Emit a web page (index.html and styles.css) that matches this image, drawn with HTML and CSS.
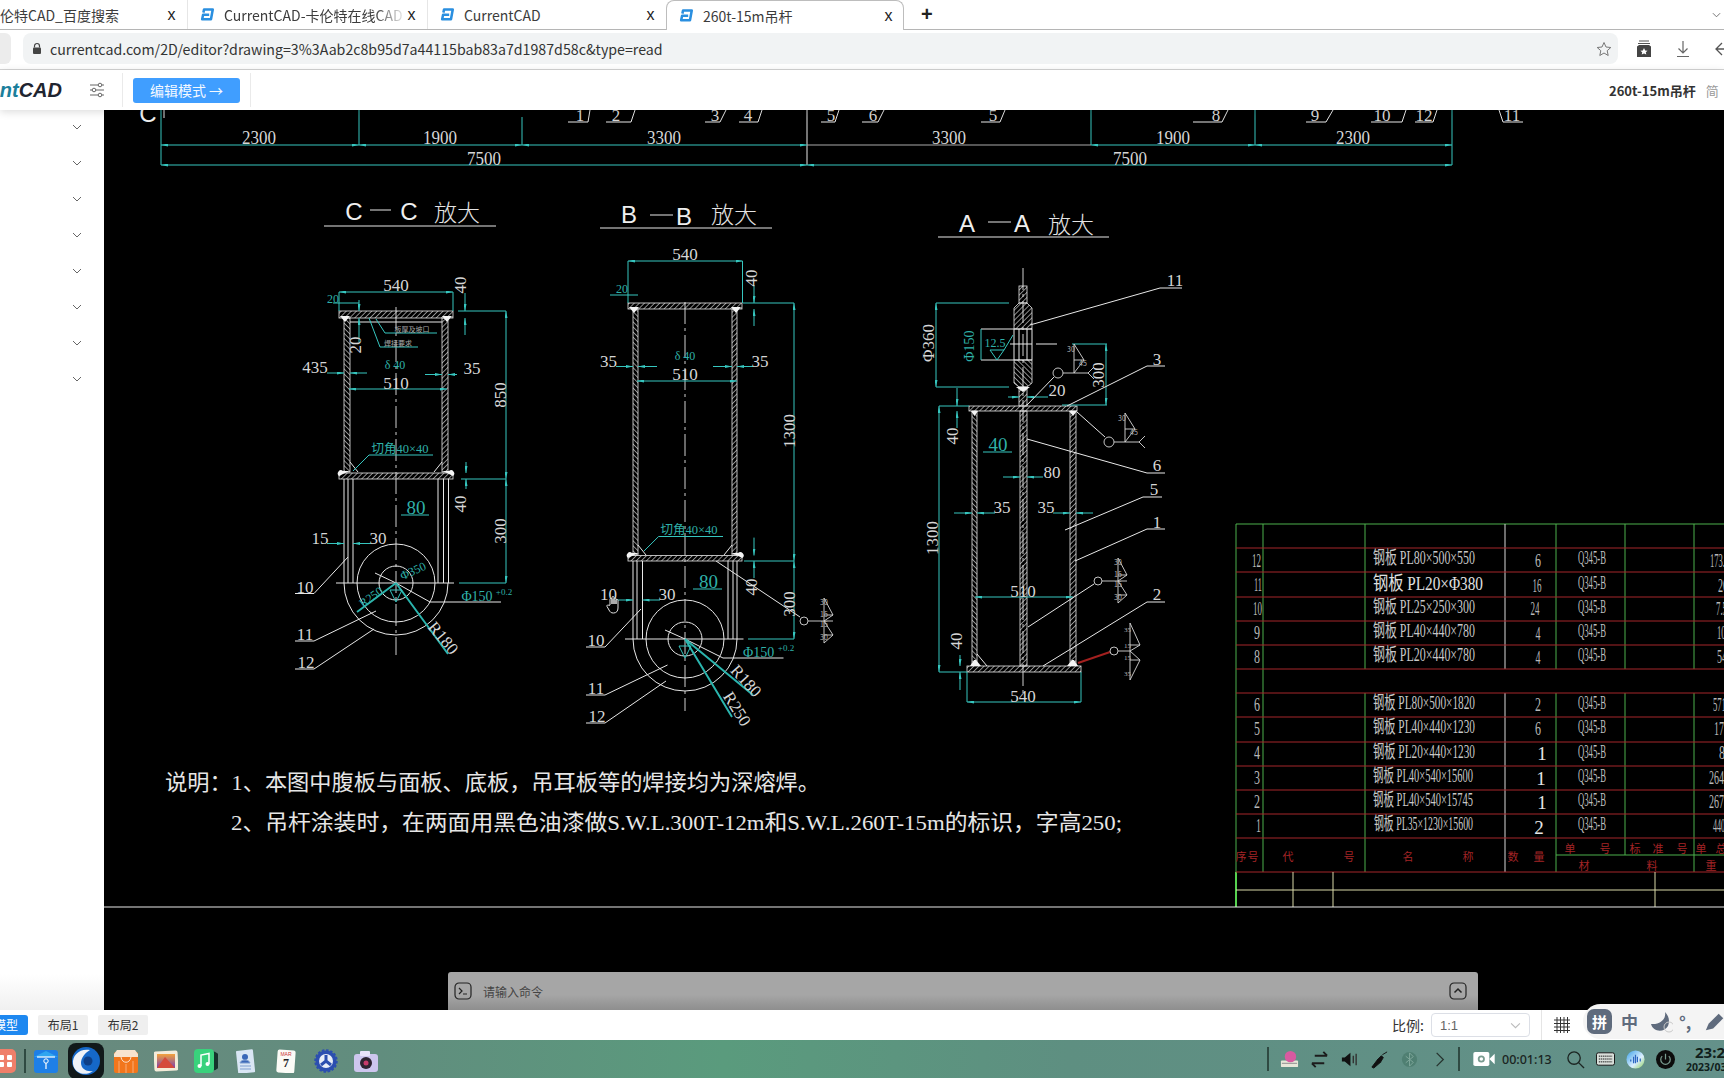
FILE: index.html
```html
<!DOCTYPE html>
<html lang="zh-CN">
<head>
<meta charset="utf-8">
<title>260t-15m吊杆</title>
<link rel="stylesheet" href="styles.css">
</head>
<body>
<svg class="defs" width="0" height="0" aria-hidden="true">
  <defs>
    <symbol id="ccad" viewBox="0 0 16 16">
      <path d="M3.6 6 4.300 2.700H13.600L11.700 13H2.300L3.300 8.300H9.800" fill="none" stroke="#2a8fe0" stroke-width="2.700" stroke-linejoin="round"/>
    </symbol>
    <pattern id="h" width="3.600" height="3.600" patternUnits="userSpaceOnUse" patternTransform="rotate(45)">
      <line x1="0" y1="0" x2="0" y2="3.600" stroke="#e4e4e4" stroke-width="1.200"/>
    </pattern>
    <pattern id="h2" width="3.600" height="3.600" patternUnits="userSpaceOnUse" patternTransform="rotate(-45)">
      <line x1="0" y1="0" x2="0" y2="3.600" stroke="#e4e4e4" stroke-width="1.200"/>
    </pattern>
    <marker id="a" viewBox="0 0 7 3" refX="7" refY="1.500" markerWidth="7" markerHeight="3" orient="auto-start-reverse" markerUnits="userSpaceOnUse">
      <path d="M0 0 7 1.500 0 3Z" fill="#36c6bf"/>
    </marker>
    <g id="wa" class="thin">
      <circle cx="1058" cy="373" r="5"/>
      <path d="M1063 373H1088M1074 344V373M1074 344 1084 360H1074M1074 373 1084 360M1088 373 1094 367M1088 373 1094 379"/>
      <text class="tiny" x="1067" y="352">30</text>
      <text class="tiny" x="1079" y="366">45</text>
    </g>
    <g id="wb" class="thin">
      <circle cx="1098" cy="581" r="4"/>
      <path d="M1102 581H1127M1118 558V603M1118 558 1127 575H1118M1118 603 1127 595H1118M1118 581 1127 575M1118 581 1127 595"/>
      <text class="tiny" x="1114" y="565">30</text>
      <text class="tiny" x="1114" y="577">15</text>
      <text class="tiny" x="1114" y="587">15</text>
      <text class="tiny" x="1114" y="600">30</text>
    </g>
  </defs>
</svg>

<header class="tabs">
  <div class="tab tab-first"><span class="tab-text">伦特CAD_百度搜索</span><span class="tab-x">x</span></div>
  <div class="tab tab-second"><svg class="tab-ico"><use href="#ccad"/></svg><span class="tab-text fade">CurrentCAD-卡伦特在线CAD</span><span class="tab-x">x</span></div>
  <div class="tab tab-third"><svg class="tab-ico"><use href="#ccad"/></svg><span class="tab-text">CurrentCAD</span><span class="tab-x">x</span></div>
  <div class="tab tab-active"><svg class="tab-ico"><use href="#ccad"/></svg><span class="tab-text">260t-15m吊杆</span><span class="tab-x">x</span></div>
  <span class="tab-plus">+</span>
  <svg class="tab-more" viewBox="0 0 10 6"><path d="M1 1 5 5 9 1" fill="none" stroke="#666"/></svg>
</header>

<nav class="addr">
  <div class="nav-btn"></div>
  <div class="url">
    <svg class="lock" viewBox="0 0 10 12"><path d="M2.500 5V3.500A2.500 2.500 0 0 1 7.500 3.500V5" fill="none" stroke="#444" stroke-width="1.200"/><rect x="1" y="5" width="8" height="6.500" rx="1" fill="#444"/></svg>
    <span class="url-text">currentcad.com/2D/editor?drawing=3%3Aab2c8b95d7a44115bab83a7d1987d58c&amp;type=read</span>
    <svg class="star" viewBox="0 0 16 16"><path d="M8 1.500 10 6 14.800 6.500 11.200 9.700 12.200 14.500 8 12 3.800 14.500 4.800 9.700 1.200 6.500 6 6Z" fill="none" stroke="#777"/></svg>
  </div>
  <div class="addr-tools">
    <svg class="addr-ico" viewBox="0 0 16 18"><path d="M3 1H13M2 3.500H14" stroke="#555" stroke-width="1.200"/><path d="M1 6.500 3 5H13L15 6.500V17H1Z" fill="#444"/><path d="M8 8 9.200 10.400 11.600 10.700 9.800 12.300 10.300 14.600 8 13.400 5.700 14.600 6.200 12.300 4.400 10.700 6.800 10.400Z" fill="#fff"/></svg>
    <svg class="addr-ico" viewBox="0 0 16 18"><path d="M8 1V13M3.500 8.500 8 13 12.500 8.500M2 16.500H14" fill="none" stroke="#666" stroke-width="1.200"/></svg>
    <svg class="addr-ico" viewBox="0 0 16 18"><path d="M15 9H2M8 3 2 9 8 15" fill="none" stroke="#555" stroke-width="1.300"/></svg>
  </div>
</nav>

<section class="tool">
  <div class="logo"><span class="logo-a">nt</span>CAD</div>
  <svg class="sliders" viewBox="0 0 16 16"><path d="M1 3H9M13 3H15M1 8H3M7 8H15M1 13H9M13 13H15" stroke="#666"/><circle cx="11" cy="3" r="1.800" fill="none" stroke="#666"/><circle cx="5" cy="8" r="1.800" fill="none" stroke="#666"/><circle cx="11" cy="13" r="1.800" fill="none" stroke="#666"/></svg>
  <i class="vsep"></i>
  <button class="edit-btn">编辑模式 →</button>
  <i class="vsep"></i>
  <div class="doc"><b class="doc-name">260t-15m吊杆</b><span class="doc-tag">简</span></div>
</section>

<main class="main">
  <aside class="side">
    <div class="side-row"><svg class="chev" viewBox="0 0 10 6"><path d="M1 1 5 5 9 1"/></svg></div>
    <div class="side-row"><svg class="chev" viewBox="0 0 10 6"><path d="M1 1 5 5 9 1"/></svg></div>
    <div class="side-row"><svg class="chev" viewBox="0 0 10 6"><path d="M1 1 5 5 9 1"/></svg></div>
    <div class="side-row"><svg class="chev" viewBox="0 0 10 6"><path d="M1 1 5 5 9 1"/></svg></div>
    <div class="side-row"><svg class="chev" viewBox="0 0 10 6"><path d="M1 1 5 5 9 1"/></svg></div>
    <div class="side-row"><svg class="chev" viewBox="0 0 10 6"><path d="M1 1 5 5 9 1"/></svg></div>
    <div class="side-row"><svg class="chev" viewBox="0 0 10 6"><path d="M1 1 5 5 9 1"/></svg></div>
    <div class="side-row"><svg class="chev" viewBox="0 0 10 6"><path d="M1 1 5 5 9 1"/></svg></div>
  </aside>
  <div class="canvas">
    <svg class="cad" width="1620" height="900" viewBox="104 110 1620 900">
      <!-- top dimension band -->
      <text class="tl mid" x="148" y="122">C</text>
      <path class="c" d="M161 110V165M359 110V145M522 117V145M1091 110V145M1255 110V145M1452 110V165"/>
      <path class="w" d="M807 110V165M164 110V118"/>
      <g class="c" marker-start="url(#a)" marker-end="url(#a)">
        <line x1="161" y1="145" x2="359" y2="145"/><line x1="359" y1="145" x2="522" y2="145"/><line x1="522" y1="145" x2="807" y2="145"/>
        <line x1="1091" y1="145" x2="1255" y2="145"/><line x1="1255" y1="145" x2="1452" y2="145"/>
        <line x1="161" y1="165" x2="807" y2="165"/><line x1="807" y1="165" x2="1452" y2="165"/>
      </g>
      <line class="gy" x1="807" y1="145" x2="1091" y2="145"/>
      <text class="d m top" x="259" y="137" textLength="34" lengthAdjust="spacingAndGlyphs">2300</text>
      <text class="d m top" x="440" y="137" textLength="34" lengthAdjust="spacingAndGlyphs">1900</text>
      <text class="d m top" x="664" y="137" textLength="34" lengthAdjust="spacingAndGlyphs">3300</text>
      <text class="d m top" x="949" y="137" textLength="34" lengthAdjust="spacingAndGlyphs">3300</text>
      <text class="d m top" x="1173" y="137" textLength="34" lengthAdjust="spacingAndGlyphs">1900</text>
      <text class="d m top" x="1353" y="137" textLength="34" lengthAdjust="spacingAndGlyphs">2300</text>
      <text class="d m top" x="484" y="158" textLength="34" lengthAdjust="spacingAndGlyphs">7500</text>
      <text class="d m top" x="1130" y="158" textLength="34" lengthAdjust="spacingAndGlyphs">7500</text>
      <path class="w" d="M568 122H588L590 110M606 122H631L635 110M705 122H720L726 110M739 122H758L762 110M821 122H835L839 110M862 122H878L884 110M981 122H1000L1005 110M1193 122H1222L1228 110M1306 122H1326L1333 110M1371 122H1402L1406 110M1415 122H1433L1437 110M1523 122H1503L1499 110"/>
      <text class="d m" x="580" y="115">1</text><text class="d m" x="616" y="115">2</text><text class="d m" x="715" y="115">3</text><text class="d m" x="748" y="115">4</text>
      <text class="d m" x="831" y="115">5</text><text class="d m" x="873" y="115">6</text><text class="d m" x="993" y="115">5</text><text class="d m" x="1216" y="115">8</text>
      <text class="d m" x="1315" y="115">9</text><text class="d m" x="1382" y="115">10</text><text class="d m" x="1424" y="115">12</text><text class="d m" x="1512" y="115">11</text>

      <!-- C-C -->
      <text class="tl m" x="354" y="211">C</text><path class="w" d="M370 210H391"/><text class="tl m" x="409" y="211">C</text><text class="tz m" x="457" y="211">放大</text>
      <path class="w" d="M324 226H496"/>
      <path class="cl" d="M396 307V655"/>
      <rect class="hb" x="339" y="311" width="114" height="7" fill="url(#h)"/>
      <rect class="hb" x="344" y="318" width="6" height="154" fill="url(#h2)"/>
      <rect class="hb" x="442" y="318" width="6" height="154" fill="url(#h)"/>
      <rect class="hb" x="339" y="473" width="114" height="6" fill="url(#h)"/>
      <path class="w" d="M350 322H442M350 462 358 472M442 462 434 472M344 479V583M348 479V583M353 479V583M438 479V583M443.500 479V583M448.500 479V583M336 583H454M344 583A52 52 0 0 0 448 583"/>
      <circle class="w" cx="396" cy="583" r="17"/><circle class="w" cx="396" cy="583" r="39"/>
      <path class="blob" d="M340 316 350 316 345 322ZM442 316 452 316 447 322ZM339 476A3 3 0 0 1 343 471H350L345 473ZM453 476A3 3 0 0 0 449 471H442L447 473Z"/>
      <path class="c" d="M339 292V311M453 292V311M458 311H506M461 479H506M459 583H506M333 303H359M369 318 380 347H418M376 319 385 333H437M369 455H433M369 455 353 471M401 515H429"/>
      <g class="c" marker-start="url(#a)" marker-end="url(#a)">
        <line x1="339" y1="292" x2="453" y2="292"/><line x1="349" y1="389" x2="447" y2="389"/><line x1="506" y1="311" x2="506" y2="479"/><line x1="506" y1="479" x2="506" y2="583"/>
      </g>
      <g class="c" marker-end="url(#a)">
        <line x1="327" y1="373" x2="344" y2="373"/><line x1="367" y1="373" x2="350" y2="373"/><line x1="425" y1="374.500" x2="442" y2="374.500"/><line x1="457" y1="374.500" x2="448" y2="374.500"/>
        <line x1="327" y1="543.500" x2="344" y2="543.500"/><line x1="371" y1="543.500" x2="353" y2="543.500"/>
        <line x1="465" y1="293" x2="465" y2="311"/><line x1="465" y1="335" x2="465" y2="318"/><line x1="466" y1="462" x2="466" y2="473"/><line x1="466" y1="489" x2="466" y2="479"/>
        <line x1="359" y1="300" x2="359" y2="311"/><line x1="359" y1="342" x2="359" y2="318"/>
      </g>
      <text class="d m" x="396" y="285">540</text>
      <text class="d m" transform="rotate(-90 460 285)" x="460" y="285">40</text>
      <text class="d m" transform="rotate(-90 355 345)" x="355" y="345">20</text>
      <text class="tc small m" x="333" y="299">20</text>
      <text class="tc tiny m" x="412" y="330">板厚及坡口</text><text class="tc tiny m" x="398" y="344">焊接要求</text>
      <text class="d m" x="315" y="367">435</text><text class="d m" x="472" y="368">35</text>
      <text class="tc small m" x="395" y="365">δ 40</text>
      <text class="d m" x="396" y="383">510</text>
      <text class="d m" transform="rotate(-90 500 395)" x="500" y="395">850</text>
      <text class="d m" transform="rotate(-90 500 531)" x="500" y="531">300</text>
      <text class="d m" transform="rotate(-90 460 504)" x="460" y="504">40</text>
      <text class="tc cut m" x="400" y="449">切角40×40</text>
      <text class="tc big m" x="416" y="507">80</text>
      <text class="d m" x="320" y="538">15</text><text class="d m" x="378" y="538">30</text>
      <text class="d m" x="305" y="587">10</text><text class="d m" x="305" y="634">11</text><text class="d m" x="306" y="662">12</text>
      <path class="w" d="M295 593.500H314L348 557M295 641H314L376 611M295 669H314L374 629M375 573 396 583 430 602H501"/>
      <path class="cb" d="M396 583 357 612M396 583 448 654"/>
      <text class="tc small m" transform="rotate(-25 413 571)" x="413" y="571">Φ350</text>
      <text class="tc small m" transform="rotate(-35 371 597)" x="371" y="597">R250</text>
      <text class="d m" transform="rotate(50 443 638)" x="443" y="638">R180</text>
      <path class="c" d="M390 590H402L396 602Z"/>
      <text class="tc m ph" x="477" y="596">Φ150</text><text class="tc tiny2 m" x="504" y="592">+0.2</text>

      <!-- B-B -->
      <text class="tl m" x="629" y="214">B</text><path class="w" d="M650 215H673"/><text class="tl m" x="684" y="216">B</text><text class="tz m" x="734" y="213">放大</text>
      <path class="w" d="M600 228H772"/>
      <path class="cl" d="M685 302V711"/>
      <rect class="hb" x="628" y="303" width="114" height="6" fill="url(#h)"/>
      <rect class="hb" x="633" y="309" width="5" height="246" fill="url(#h2)"/>
      <rect class="hb" x="732" y="309" width="5" height="246" fill="url(#h)"/>
      <rect class="hb" x="628" y="555.500" width="114" height="5.500" fill="url(#h)"/>
      <path class="w" d="M638 545 646 555M732 545 724 555M633 561V639M637 561V639M642.500 561V639M728 561V639M733 561V639M737 561V639M625 639H743.500M633 639A52 52 0 0 0 737 639"/>
      <circle class="w" cx="685" cy="639" r="17"/><circle class="w" cx="685" cy="639" r="39"/>
      <path class="blob" d="M629 307 639 307 634 313ZM731 307 741 307 736 313ZM628 558A3 3 0 0 1 632 553H639L634 555ZM742.500 558A3 3 0 0 0 738 553H731L736 555Z"/>
      <path class="c" d="M628 261V303M742.500 261V303M743 303H794M610 295H638M748 639H794M744 561H794M658.600 536.500H723M658.600 536.500 644 551M693 589H722"/>
      <g class="c" marker-start="url(#a)" marker-end="url(#a)">
        <line x1="628" y1="261" x2="742.500" y2="261"/><line x1="637" y1="381" x2="737" y2="381"/><line x1="794" y1="303" x2="794" y2="561"/><line x1="794" y1="561" x2="794" y2="639"/>
      </g>
      <g class="c" marker-end="url(#a)">
        <line x1="616" y1="366.500" x2="633" y2="366.500"/><line x1="657" y1="366.500" x2="638" y2="366.500"/><line x1="713" y1="366.500" x2="732" y2="366.500"/><line x1="753" y1="366.500" x2="737" y2="366.500"/>
        <line x1="616" y1="600" x2="633" y2="600"/><line x1="660" y1="600" x2="642.500" y2="600"/>
        <line x1="754" y1="285" x2="754" y2="303"/><line x1="754" y1="326" x2="754" y2="309"/><line x1="754" y1="537.600" x2="754" y2="555.500"/><line x1="754" y1="578" x2="754" y2="561"/>
      </g>
      <text class="d m" x="685" y="254">540</text>
      <text class="d m" transform="rotate(-90 751 278)" x="751" y="278">40</text>
      <text class="tc small m" x="622" y="289">20</text>
      <text class="d m" x="608.500" y="361">35</text><text class="d m" x="760" y="361">35</text>
      <text class="tc small m" x="685" y="356">δ 40</text>
      <text class="d m" x="685" y="374.500">510</text>
      <text class="d m" transform="rotate(-90 789 431)" x="789" y="431">1300</text>
      <text class="d m" transform="rotate(-90 789 604)" x="789" y="604">300</text>
      <text class="d m" transform="rotate(-90 751 587)" x="751" y="587">40</text>
      <text class="tc cut m" x="689" y="530">切角40×40</text>
      <text class="tc big m" x="708.600" y="581">80</text>
      <text class="d m" x="608.500" y="594">10</text><text class="d m" x="667" y="594">30</text>
      <text class="d m" x="596" y="640">10</text><text class="d m" x="596" y="688">11</text><text class="d m" x="597" y="716">12</text>
      <path class="w" d="M586 647H605L641 609M586 695H605L667.500 665M586 723H605L666 681M716 561 800 617M665 630 685 639 723 658H783.500"/>
      <path class="cb" d="M685 639 753 695M685 639 732 717"/>
      <text class="d m" transform="rotate(48 746 681)" x="746" y="681">R180</text>
      <text class="d m" transform="rotate(58 737 709)" x="737" y="709">R250</text>
      <path class="c" d="M679 646H691L685 658Z"/>
      <text class="tc m ph" x="758.600" y="652">Φ150</text><text class="tc tiny2 m" x="786" y="647.600">+0.2</text>
      <use href="#wb" transform="translate(-294 40)"/>
      <svg class="hand" x="606" y="596" width="14" height="18" viewBox="0 0 14 18"><path d="M4 9V3.500A1 1 0 0 1 6 3.500V8 1.500A1 1 0 0 1 8 1.500V8 3A1 1 0 0 1 10 3V8 4.500A1 1 0 0 1 12 4.500V12C12 15 10.500 17 7.500 17 5 17 4 16 3 14L1 10.500C.5 9 2 8.500 3 9.500Z" fill="#000" stroke="#e6e6e6"/></svg>

      <!-- A-A -->
      <text class="tl m" x="967" y="223">A</text><path class="w" d="M988 222H1011"/><text class="tl m" x="1022" y="223">A</text><text class="tz m" x="1071" y="223">放大</text>
      <path class="w" d="M938 237H1109"/>
      <path class="cl" d="M1023 268V693"/>
      <rect class="hb" x="1019" y="286" width="8" height="17" fill="url(#h)"/>
      <path class="hb" d="M1014 329V308L1019 303H1027L1032 308V329Z" fill="url(#h)"/>
      <path class="hb" d="M1014 360V383L1019 387H1027L1032 383V360Z" fill="url(#h2)"/>
      <path class="w" d="M1014 329V360M1032 329V360M1019 329V360M1027 329V360M981 329H1032M981 360H1032M1010 344H1032M1036 344H1057"/>
      <rect class="hb" x="1019" y="387" width="8" height="19" fill="url(#h)"/>
      <rect class="hb" x="969" y="406" width="108" height="5" fill="url(#h)"/>
      <rect class="hb" x="972" y="411" width="5" height="254" fill="url(#h2)"/>
      <rect class="hb" x="1070" y="411" width="6" height="254" fill="url(#h)"/>
      <rect class="hb" x="1020" y="411" width="7" height="255" fill="url(#h)"/>
      <rect class="hb" x="967" y="666" width="114" height="6" fill="url(#h)"/>
      <path class="w" d="M977 654 987 666"/>
      <path class="blob" d="M971 411H978L974.500 416ZM1069 411H1077L1073 416ZM970 666 974 660H976L981 666ZM1067 666 1072 660H1074L1078 666ZM1016 387H1030L1023 392Z"/>
      <path class="c" d="M936 303H1009M936 387H1009M981 329V360M1072 344H1107M1062 405H1107M939 406H969M939 672H967M983 452H1012M967 672V702M1081 672V702"/>
      <g class="c" marker-start="url(#a)" marker-end="url(#a)">
        <line x1="936" y1="303" x2="936" y2="387"/><line x1="1106" y1="344" x2="1106" y2="405"/><line x1="939" y1="406" x2="939" y2="672"/><line x1="975" y1="597" x2="1073" y2="597"/><line x1="967" y1="702" x2="1081" y2="702"/>
      </g>
      <g class="c" marker-end="url(#a)">
        <line x1="954" y1="513" x2="972" y2="513"/><line x1="995" y1="513" x2="977" y2="513"/><line x1="1053" y1="513" x2="1070" y2="513"/><line x1="1093" y1="513" x2="1076" y2="513"/>
        <line x1="1003" y1="477" x2="1020" y2="477"/><line x1="1043" y1="477" x2="1027" y2="477"/><line x1="1008" y1="397" x2="1019" y2="397"/><line x1="1048" y1="397" x2="1027" y2="397"/>
        <line x1="957" y1="388" x2="957" y2="406"/><line x1="957" y1="428" x2="957" y2="411"/><line x1="960" y1="655" x2="960" y2="666"/><line x1="960" y1="690" x2="960" y2="672"/>
      </g>
      <text class="d m" transform="rotate(-90 928 343)" x="928" y="343">Φ360</text>
      <text class="tc m ph" transform="rotate(-90 969 346)" x="969" y="346">Φ150</text>
      <text class="tc small m" x="995" y="343">12.5</text>
      <path class="c" d="M990 350H1004L997 360ZM1004 350 1013 335"/>
      <text class="d m" transform="rotate(-90 1098 375)" x="1098" y="375">300</text>
      <text class="d m" x="1057" y="390">20</text>
      <text class="d m" transform="rotate(-90 952 436)" x="952" y="436">40</text>
      <text class="tc big m" x="998" y="444">40</text>
      <text class="d m" x="1052" y="472">80</text><text class="d m" x="1002" y="507">35</text><text class="d m" x="1046" y="507">35</text>
      <text class="d m" transform="rotate(-90 932 538)" x="932" y="538">1300</text>
      <text class="d m" x="1023" y="591">510</text>
      <text class="d m" transform="rotate(-90 956 641)" x="956" y="641">40</text>
      <text class="d m" x="1023" y="696">540</text>
      <use href="#wa"/>
      <use href="#wa" transform="translate(51 69)"/>
      <use href="#wb"/>
      <path class="w" d="M1182 288H1160L1030 325M1165 366H1147L1067 406M1165 473H1147L1027 439M1162 497H1143L1065 530M1165 529H1147L1075 561M1165 602H1147L1043 666M1054 377 1027 405M1094 584 1028 627M1105 437 1077 412"/>
      <text class="d m" x="1175" y="280">11</text><text class="d m" x="1157" y="359">3</text><text class="d m" x="1157" y="465">6</text>
      <text class="d m" x="1154" y="489">5</text><text class="d m" x="1157" y="522">1</text><text class="d m" x="1157" y="594">2</text>
      <line class="rl" x1="1078" y1="663" x2="1110" y2="652"/>
      <g class="thin">
        <circle cx="1114" cy="651" r="4"/>
        <path d="M1118 651H1130M1130 623V680M1130 623 1140 645H1130M1130 680 1140 660H1130M1130 651 1140 645M1130 651 1140 660"/>
        <text class="tiny" x="1124" y="632">35</text><text class="tiny" x="1124" y="648">15</text><text class="tiny" x="1124" y="660">15</text><text class="tiny" x="1124" y="676">35</text>
      </g>

      <!-- notes -->
      <text class="note" x="165" y="790" textLength="655" lengthAdjust="spacingAndGlyphs">说明：1、本图中腹板与面板、底板，吊耳板等的焊接均为深熔焊。</text>
      <text class="note" x="231" y="830" textLength="891" lengthAdjust="spacingAndGlyphs">2、吊杆涂装时，在两面用黑色油漆做S.W.L.300T-12m和S.W.L.260T-15m的标识，字高250;</text>

      <!-- BOM -->
      <path class="gl" d="M1236 524H1724M1236 524V907M1263 524V872M1365 524V669M1365 693V872M1556 524V669M1556 693V872M1625 524V669M1625 693V855M1694 524V669M1694 693V872M1556 855H1724"/>
      <path class="gl2" d="M1236 872V907"/>
      <path class="wl2" d="M1505 524V669M1505 693V872"/>
      <path class="rd" d="M1236 548H1724M1236 572H1724M1236 597H1724M1236 621H1724M1236 645H1724M1236 669H1724M1236 693H1724M1236 717H1724M1236 742H1724M1236 766H1724M1236 790H1724M1236 814H1724M1236 838H1724M1236 872H1724"/>
      <path class="yl" d="M1236 890H1724M1293 872V907M1333 872V907M1655 872V907"/>
      <line class="wl" x1="104" y1="907" x2="1724" y2="907"/>
      <g class="no">
        <text x="1261" y="560" textLength="9" lengthAdjust="spacingAndGlyphs">12</text><text x="1262" y="584" textLength="8" lengthAdjust="spacingAndGlyphs">11</text><text x="1262" y="608" textLength="9" lengthAdjust="spacingAndGlyphs">10</text><text x="1260" y="632" textLength="6" lengthAdjust="spacingAndGlyphs">9</text><text x="1260" y="656" textLength="6" lengthAdjust="spacingAndGlyphs">8</text>
        <text x="1260" y="704" textLength="6" lengthAdjust="spacingAndGlyphs">6</text><text x="1260" y="728" textLength="6" lengthAdjust="spacingAndGlyphs">5</text><text x="1260" y="752" textLength="6" lengthAdjust="spacingAndGlyphs">4</text><text x="1260" y="777" textLength="6" lengthAdjust="spacingAndGlyphs">3</text><text x="1260" y="801" textLength="6" lengthAdjust="spacingAndGlyphs">2</text><text x="1261" y="825" textLength="5" lengthAdjust="spacingAndGlyphs">1</text>
      </g>
      <g class="nm">
        <text x="1373" y="558" textLength="102" lengthAdjust="spacingAndGlyphs">钢板 PL80×500×550</text>
        <text class="nm-b" x="1373" y="583" textLength="110" lengthAdjust="spacingAndGlyphs">钢板 PL20×Φ380</text>
        <text x="1373" y="607" textLength="102" lengthAdjust="spacingAndGlyphs">钢板 PL25×250×300</text>
        <text x="1373" y="631" textLength="102" lengthAdjust="spacingAndGlyphs">钢板 PL40×440×780</text>
        <text x="1373" y="655" textLength="102" lengthAdjust="spacingAndGlyphs">钢板 PL20×440×780</text>
        <text x="1373" y="703" textLength="102" lengthAdjust="spacingAndGlyphs">钢板 PL80×500×1820</text>
        <text x="1373" y="727" textLength="102" lengthAdjust="spacingAndGlyphs">钢板 PL40×440×1230</text>
        <text x="1373" y="752" textLength="102" lengthAdjust="spacingAndGlyphs">钢板 PL20×440×1230</text>
        <text x="1373" y="776" textLength="100" lengthAdjust="spacingAndGlyphs">钢板 PL40×540×15600</text>
        <text x="1373" y="800" textLength="100" lengthAdjust="spacingAndGlyphs">钢板 PL40×540×15745</text>
        <text x="1374" y="824" textLength="99" lengthAdjust="spacingAndGlyphs">钢板 PL35×1230×15600</text>
      </g>
      <g class="qty">
        <text x="1538" y="560" textLength="6" lengthAdjust="spacingAndGlyphs">6</text><text x="1537" y="585" textLength="9" lengthAdjust="spacingAndGlyphs">16</text><text x="1535" y="608" textLength="9" lengthAdjust="spacingAndGlyphs">24</text><text x="1538" y="633" textLength="5" lengthAdjust="spacingAndGlyphs">4</text><text x="1538" y="657" textLength="5" lengthAdjust="spacingAndGlyphs">4</text>
        <text x="1538" y="704" textLength="6" lengthAdjust="spacingAndGlyphs">2</text><text x="1538" y="728" textLength="6" lengthAdjust="spacingAndGlyphs">6</text>
        <text class="qty-b" x="1542" y="753">1</text><text class="qty-b" x="1541" y="778">1</text><text class="qty-b" x="1542" y="802">1</text><text class="qty-b" x="1539" y="827">2</text>
      </g>
      <g class="mat">
        <text x="1592" y="558" textLength="28" lengthAdjust="spacingAndGlyphs">Q345-B</text><text x="1592" y="583" textLength="28" lengthAdjust="spacingAndGlyphs">Q345-B</text><text x="1592" y="607" textLength="28" lengthAdjust="spacingAndGlyphs">Q345-B</text><text x="1592" y="631" textLength="28" lengthAdjust="spacingAndGlyphs">Q345-B</text><text x="1592" y="655" textLength="28" lengthAdjust="spacingAndGlyphs">Q345-B</text>
        <text x="1592" y="703" textLength="28" lengthAdjust="spacingAndGlyphs">Q345-B</text><text x="1592" y="727" textLength="28" lengthAdjust="spacingAndGlyphs">Q345-B</text><text x="1592" y="752" textLength="28" lengthAdjust="spacingAndGlyphs">Q345-B</text><text x="1592" y="776" textLength="28" lengthAdjust="spacingAndGlyphs">Q345-B</text><text x="1592" y="800" textLength="28" lengthAdjust="spacingAndGlyphs">Q345-B</text><text x="1592" y="824" textLength="28" lengthAdjust="spacingAndGlyphs">Q345-B</text>
      </g>
      <g class="wt">
        <text x="1710" y="560" textLength="15" lengthAdjust="spacingAndGlyphs">173.</text><text x="1718" y="585" textLength="10" lengthAdjust="spacingAndGlyphs">20</text><text x="1716" y="608" textLength="11" lengthAdjust="spacingAndGlyphs">7.5</text><text x="1717" y="632" textLength="13" lengthAdjust="spacingAndGlyphs">100</text><text x="1717" y="656" textLength="10" lengthAdjust="spacingAndGlyphs">54</text>
        <text x="1713" y="704" textLength="13" lengthAdjust="spacingAndGlyphs">571</text><text x="1714" y="728" textLength="10" lengthAdjust="spacingAndGlyphs">17</text><text x="1719" y="752" textLength="6" lengthAdjust="spacingAndGlyphs">8</text><text x="1709" y="777" textLength="15" lengthAdjust="spacingAndGlyphs">264</text><text x="1709" y="801" textLength="15" lengthAdjust="spacingAndGlyphs">267</text><text x="1713" y="825" textLength="12" lengthAdjust="spacingAndGlyphs">440</text>
      </g>
      <g class="hd">
        <text x="1241" y="857">序</text><text x="1253" y="857">号</text><text x="1288" y="857">代</text><text x="1349" y="857">号</text><text x="1408" y="857">名</text><text x="1468" y="857">称</text><text x="1513" y="857">数</text><text x="1539" y="857">量</text>
        <text x="1570" y="849">单</text><text x="1605" y="849">号</text><text x="1635" y="849">标</text><text x="1658" y="849">准</text><text x="1682" y="849">号</text><text x="1701" y="849">单</text><text x="1721" y="849">总</text>
        <text x="1584" y="866">材</text><text x="1652" y="866">料</text><text x="1711" y="866">重</text>
      </g>
    </svg>
    <div class="cmd">
      <svg class="cmd-ico" viewBox="0 0 18 18"><rect x="1" y="1" width="16" height="16" rx="4" fill="none" stroke="#222" stroke-width="1.200"/><path d="M5 6 8 9 5 12M9 12H13" fill="none" stroke="#222" stroke-width="1.200"/></svg>
      <span class="cmd-text">请输入命令</span>
      <svg class="cmd-ico cmd-up" viewBox="0 0 18 18"><rect x="1" y="1" width="16" height="16" rx="4" fill="none" stroke="#222" stroke-width="1.200"/><path d="M5.500 10.500 9 7 12.500 10.500" fill="none" stroke="#222" stroke-width="1.500"/></svg>
    </div>
  </div>
</main>

<section class="sheet">
  <span class="sheet-tab sheet-on">模型</span>
  <span class="sheet-tab">布局1</span>
  <span class="sheet-tab">布局2</span>
  <div class="scale">
    <span class="scale-label">比例:</span>
    <div class="scale-sel"><span>1:1</span><svg class="chev chev-l" viewBox="0 0 10 6"><path d="M1 1 5 5 9 1"/></svg></div>
    <i class="scale-sep"></i>
    <svg class="grid-ico" viewBox="0 0 16 16"><path d="M0 3H16M0 6.500H16M0 10H16M0 13.500H16M3 0V16M6.500 0V16M10 0V16M13.500 0V16" stroke="#333"/></svg>
  </div>
  <div class="ime">
    <span class="ime-key">拼</span>
    <span class="ime-cn">中</span>
    <svg class="ime-moon" viewBox="0 0 24 24"><path d="M16 2C17.500 9 11 15 2 14 4 22 15 23 19 16 21 11 20 6 16 2Z" fill="#5f6b7d"/><circle cx="20" cy="17" r="5" fill="none" stroke="#c9c9c9"/></svg>
    <span class="ime-dot">°,</span>
    <svg class="ime-pen" viewBox="0 0 24 24"><path d="M2 21 5 14 16 3 21 8 10 19Z" fill="#5f6b7d"/></svg>
  </div>
</section>

<footer class="dock">
  <div class="apps">
    <svg class="app app-cut" viewBox="0 0 16 24"><rect x="-10" width="26" height="24" rx="5" fill="#ef7f6a"/><rect x="-1" y="6" width="5" height="5" rx="1" fill="#fff"/><rect x="7" y="6" width="5" height="5" rx="1" fill="#fff"/><rect x="-1" y="13" width="5" height="5" rx="1" fill="#fff"/><rect x="7" y="13" width="5" height="5" rx="1" fill="#fff"/></svg>
    <i class="dock-sep"></i>
    <svg class="app" viewBox="0 0 24 24"><rect y="1" width="24" height="23" rx="3" fill="#1e7fe6"/><path d="M0 8 12 2 24 8Z" fill="#2fa5f0"/><path d="M3 8H21" stroke="#fff" stroke-width="1.200"/><circle cx="12" cy="12" r="2.200" fill="none" stroke="#fff"/><path d="M12 14V20" stroke="#fff" stroke-width="1.200"/></svg>
    <svg class="app app-big" viewBox="0 0 36 36"><rect width="36" height="36" rx="8" fill="#11191a"/><circle cx="18" cy="18" r="14" fill="#1568c8"/><path d="M22 7C12 5 4 12 5 21 6 30 17 34 25 28 19 29 13 26 13 20 13 15 17 10 22 7Z" fill="#eef2f7"/><circle cx="20" cy="18" r="4.500" fill="#0d3f86"/></svg>
    <svg class="app" viewBox="0 0 24 24"><rect y="3" width="24" height="21" rx="2" fill="#f2761c"/><path d="M0 5 3 1H21L24 5V8H0Z" fill="#f8e3cf"/><path d="M7 8C8 15 16 15 17 8" fill="none" stroke="#f8e3cf"/><path d="M5 12V24M19 12V24M12 15V24" stroke="#f69b58" stroke-width="1.500"/></svg>
    <svg class="app" viewBox="0 0 24 24"><defs><linearGradient id="ph" x1="0" y1="0" x2="0" y2="1"><stop offset="0" stop-color="#f2a23c"/><stop offset="1" stop-color="#7d3fb0"/></linearGradient></defs><rect y="2" width="24" height="20" rx="2" fill="#f4ecd9" transform="rotate(-3 12 12)"/><rect x="3" y="5" width="18" height="14" fill="url(#ph)"/><path d="M3 19 11 8 21 19Z" fill="#d54a3b"/></svg>
    <svg class="app" viewBox="0 0 24 24"><circle cx="17" cy="12" r="10" fill="#16332c"/><rect width="20" height="24" rx="4" fill="#39d27c"/><path d="M7 17V6L15 4.500V15" fill="none" stroke="#fff" stroke-width="1.500"/><circle cx="5.500" cy="17" r="2" fill="#fff"/><circle cx="13.500" cy="15" r="2" fill="#fff"/></svg>
    <svg class="app" viewBox="0 0 24 24"><rect x="3" y="1" width="17" height="23" rx="1" fill="#d9e6f4" transform="rotate(-6 12 12)"/><circle cx="11" cy="8" r="3" fill="#3a68b8"/><path d="M6 14C7 10 15 10 16 14ZM6 17H17M6 20H17" fill="#3a68b8" stroke="#7f9fd0"/></svg>
    <svg class="app" viewBox="0 0 24 24"><rect x="3" y="1" width="18" height="23" rx="2" fill="#fbfbf6" transform="rotate(4 12 12)"/><text class="cal-m" x="12" y="7">MAR</text><text class="cal-d" x="12" y="18">7</text></svg>
    <svg class="app" viewBox="0 0 24 24"><circle cx="12" cy="12" r="10.500" fill="#2c4fb0" stroke="#2c4fb0" stroke-width="2.500" stroke-dasharray="2.500 1.600"/><circle cx="12" cy="12" r="7" fill="#e9eef8"/><path d="M12 12V6M12 12 7 16M12 12 17 16" stroke="#2c4fb0" stroke-width="3"/></svg>
    <svg class="app" viewBox="0 0 24 24"><rect y="5" width="24" height="18" rx="3" fill="#cdc6ee"/><rect x="6" y="2" width="10" height="5" rx="1" fill="#e8e3fa"/><circle cx="12" cy="14" r="6" fill="#2d2330"/><circle cx="12" cy="14" r="2.500" fill="#c73a6a"/></svg>
  </div>
  <div class="tray">
    <i class="tray-sep"></i>
    <span class="tray-slot"><svg class="tray-ico" viewBox="0 0 20 20"><rect x="1" y="11" width="18" height="7" rx="1" fill="#e8e6d8"/><circle cx="11" cy="7" r="6" fill="#d85aa0"/><path d="M2 14H18" stroke="#888"/></svg></span>
    <span class="tray-slot"><svg class="tray-ico" viewBox="0 0 20 20"><path d="M5 6H18M14 2 18 6M15 14H2M6 18 2 14" fill="none" stroke="#1c1c1c" stroke-width="2"/></svg></span>
    <span class="tray-slot"><svg class="tray-ico" viewBox="0 0 20 20"><path d="M2 8H5L11 3V17L5 12H2Z" fill="#111"/><path d="M14 6V14M17 4V16" stroke="#333" stroke-width="1.500"/></svg></span>
    <span class="tray-slot"><svg class="tray-ico" viewBox="0 0 20 20"><path d="M2 18 8 10 11 13 4 19ZM8 10 12 6 14 8 11 13ZM13 5 18 2" fill="#111" stroke="#111"/></svg></span>
    <span class="tray-slot"><svg class="tray-ico" viewBox="0 0 20 20"><circle cx="10" cy="10" r="8" fill="#4f7f72"/><path d="M6 6.500 14 13 10 17V3L14 7 6 13.500" fill="none" stroke="#7fa89b"/></svg></span>
    <span class="tray-slot"><svg class="tray-ico" viewBox="0 0 20 20"><path d="M7 3 14 10 7 17" fill="none" stroke="#26332e" stroke-width="1.300"/></svg></span>
    <i class="tray-sep tray-sep2"></i>
    <span class="tray-slot rec"><svg class="tray-ico" viewBox="0 0 24 18"><rect y="1" width="18" height="16" rx="2" fill="#fff"/><circle cx="9" cy="9" r="4" fill="#7a9c90"/><circle cx="9" cy="9" r="2" fill="#fff"/><path d="M18 9 24 3V15Z" fill="#fff"/></svg></span>
    <span class="timer">00:01:13</span>
    <span class="tray-slot"><svg class="tray-ico" viewBox="0 0 20 20"><circle cx="8.500" cy="8.500" r="6.500" fill="none" stroke="#1c2522" stroke-width="1.400"/><path d="M13 13 19 19" stroke="#1c2522" stroke-width="1.400"/></svg></span>
    <span class="tray-slot"><svg class="tray-ico tray-kb" viewBox="0 0 20 14"><rect x=".5" y=".5" width="19" height="13" rx="2" fill="#d9dfda" stroke="#111"/><path d="M3 4H17M3 7H17M3 10H17" stroke="#111" stroke-dasharray="1.500 .7"/></svg></span>
    <span class="tray-slot"><svg class="tray-ico" viewBox="0 0 20 20"><defs><linearGradient id="vo" x1="0" y1="0" x2="1" y2="1"><stop offset="0" stop-color="#3aa0e8"/><stop offset=".6" stop-color="#dcefff"/><stop offset="1" stop-color="#8fd05a"/></linearGradient></defs><circle cx="10" cy="10" r="9.500" fill="url(#vo)"/><path d="M5 10V12M8 7V14M10 5V14M12 7V13M15 9V12" stroke="#2d66c0" stroke-width="1.300"/></svg></span>
    <span class="tray-slot"><svg class="tray-ico" viewBox="0 0 20 20"><circle cx="10" cy="10" r="10" fill="#0c0c0c"/><path d="M6.500 6.500A5 5 0 1 0 13.500 6.500M10 4V10" fill="none" stroke="#7a9c90" stroke-width="1.300"/></svg></span>
    <div class="clock"><span class="clock-t">23:26</span><span class="clock-d">2023/03/07</span></div>
  </div>
</footer>
</body>
</html>
```

FILE: styles.css
```css
* { box-sizing: border-box; }
html, body { margin: 0; padding: 0; }
body {
  width: 1724px;
  height: 1078px;
  overflow: hidden;
  display: flex;
  flex-direction: column;
  background: #fff;
  font-family: "Noto Sans CJK SC", "Noto Sans", sans-serif;
  color: #333;
}
.defs { position: absolute; }

/* tabs */
.tabs {
  height: 30px;
  flex: none;
  display: flex;
  align-items: stretch;
  background: #fff;
  border-bottom: 1px solid #b5b5b5;
  position: relative;
}
.tab {
  display: flex;
  align-items: center;
  font-size: 14px;
  color: #3c3c3c;
  border-right: 1px solid #e6e6e6;
  padding-right: 11px;
}
.tab-first { width: 188px; }
.tab-second { width: 240px; padding-left: 12px; }
.tab-third { width: 238px; padding-left: 12px; border-right: 0; }
.tab-active {
  width: 238px;
  padding-left: 12px;
  border: 1px solid #bdbdbd;
  border-bottom: 0;
  border-radius: 8px 8px 0 0;
  height: 30px;
  background: #fff;
  padding-right: 10px;
}
.tab-ico { width: 15px; height: 15px; flex: none; margin-right: 9px; }
.tab-text { flex: 1; white-space: nowrap; overflow: hidden; }
.fade { -webkit-mask-image: linear-gradient(90deg, #000 82%, transparent 100%); mask-image: linear-gradient(90deg, #000 82%, transparent 100%); }
.tab-x { width: 9px; font-size: 16px; flex: none; color: #222; text-align: center; font-family: "Liberation Sans", sans-serif; }
.tab-plus { margin-left: 17px; font-size: 20px; font-weight: 700; line-height: 28px; color: #222; font-family: "Liberation Sans", sans-serif; }
.tab-more { width: 9px; height: 6px; margin: 12px 3px 0 auto; }

/* address */
.addr {
  height: 40px;
  flex: none;
  display: flex;
  align-items: center;
  background: #fff;
  border-bottom: 1px solid #d4d4d4;
  padding-bottom: 2px;
  overflow: hidden;
}
.nav-btn { width: 11px; height: 31px; background: #ececec; border-radius: 0 6px 6px 0; flex: none; }
.url {
  margin-left: 12px;
  width: 1595px;
  flex: none;
  height: 31px;
  border-radius: 8px;
  background: #f1f3f4;
  display: flex;
  align-items: center;
  padding: 0 6px 0 9px;
}
.lock { width: 10px; height: 13px; flex: none; margin-right: 8px; }
.url-text { font-size: 14.200px; color: #333; white-space: nowrap; flex: 1; }
.star { width: 16px; height: 16px; flex: none; }
.addr-tools { display: flex; gap: 23px; margin-left: 18px; align-items: center; flex: none; }
.addr-ico { width: 16px; height: 18px; flex: none; }

/* toolbar */
.tool {
  height: 40px;
  flex: none;
  display: flex;
  align-items: center;
  background: #fff;
  box-shadow: 0 2px 8px rgba(0, 0, 0, .14);
  position: relative;
  z-index: 2;
}
.logo {
  width: 62px;
  font: italic 700 20px "Liberation Sans", sans-serif;
  color: #1f2530;
  text-align: right;
  white-space: nowrap;
  overflow: hidden;
  direction: rtl;
}
.logo-a { color: #1b7f9c; }
.sliders { width: 16px; height: 16px; margin-left: 27px; flex: none; }
.vsep { width: 1px; height: 34px; background: #eaeaea; flex: none; }
.tool .vsep:nth-of-type(1) { margin-left: 17px; }
.edit-btn {
  width: 107px;
  height: 25px;
  margin: 0 10px;
  border: 0;
  border-radius: 3px;
  background: #409eff;
  color: #f4f9ff;
  font: 14px "Noto Sans CJK SC", sans-serif;
  padding: 0;
}
.doc { margin-left: auto; display: flex; align-items: center; gap: 10px; white-space: nowrap; width: 115px; overflow: hidden; }
.doc-name { font-size: 13px; color: #333; }
.doc-tag { font-size: 13px; color: #999; }

/* main */
.main { height: 900px; flex: none; display: flex; }
.side { width: 104px; flex: none; background: linear-gradient(#fff 96%, #f0f0f0); }
.side-row { height: 36px; display: flex; align-items: center; justify-content: flex-end; padding: 0 22px 2px 0; }
.chev { width: 10px; height: 6px; fill: none; stroke: #666; }
.canvas { flex: 1; background: #000; position: relative; overflow: hidden; }
.cad { display: block; }

.cad text { font-family: "Liberation Serif", "Noto Sans CJK SC", serif; }
.m { text-anchor: middle; dominant-baseline: central; }
.mid { text-anchor: middle; }
.w { stroke: #e8e8e8; stroke-width: 1; fill: none; }
.hb { stroke: #e8e8e8; stroke-width: .8; }
.gy { stroke: #aaa; }
.c { stroke: #36c6bf; stroke-width: 1; fill: none; }
.cb { stroke: #2bb5ae; stroke-width: 2; }
.cl { stroke: #cfcfcf; stroke-width: 1; stroke-dasharray: 22 4 3 4; fill: none; }
.blob { fill: #f4f4f4; }
.rl { stroke: #a3201f; stroke-width: 2; }
.d { font-size: 17px; fill: #d6d6d6; }
.top { font-size: 19px; }
.cad .tl { font-family: "Liberation Sans", sans-serif; font-size: 24px; fill: #efefef; }
.cad .tz { font-family: "Noto Sans CJK SC", sans-serif; font-size: 23px; font-weight: 300; fill: #e4e4e4; }
.tc { fill: #2fb0a9; }
.small { font-size: 12px; }
.ph { font-size: 14px; }
.big { font-size: 19px; }
.cut { font-size: 12.500px; }
.tiny { font-size: 7px; fill: #aaa; }
.tiny2 { font-size: 9px; }
.thin { stroke: #d8d8d8; fill: none; stroke-width: .9; }
.thin text { stroke: none; fill: #b5b5b5; }
.note { font-size: 22px; fill: #e6e6e6; }
.gl { stroke: #4cb04c; stroke-width: 1; fill: none; }
.gl2 { stroke: #56d24f; stroke-width: 2; fill: none; }
.wl2 { stroke: #d8d8d8; fill: none; }
.rd { stroke: #a5262a; stroke-width: 1; fill: none; }
.yl { stroke: #d9d9a8; stroke-width: 1; fill: none; }
.wl { stroke: #e8e8e8; stroke-width: 1; }
.no text, .qty text, .wt text { font-size: 19px; fill: #b8b8b8; dominant-baseline: central; }
.no text { text-anchor: end; }
.qty text { text-anchor: middle; }
.qty .qty-b { font-size: 19px; fill: #e6e6e6; }
.nm text { font-size: 18px; fill: #c8c8c8; dominant-baseline: central; }
.nm .nm-b { font-size: 19px; fill: #e0e0e0; }
.mat text { font-size: 18px; fill: #bdbdbd; text-anchor: middle; dominant-baseline: central; }
.hd text { font-size: 11px; fill: #a32426; text-anchor: middle; dominant-baseline: central; }

/* command */
.cmd {
  position: absolute;
  left: 344px;
  top: 862px;
  width: 1030px;
  height: 38px;
  border-radius: 3px 3px 0 0;
  background: linear-gradient(#a6a6a6 60%, #8e8e8e);
  display: flex;
  align-items: center;
  padding: 0 11px 0 6px;
}
.cmd-ico { width: 18px; height: 18px; flex: none; }
.cmd-text { margin-left: 11px; font-size: 12px; color: #444; }
.cmd-up { margin-left: auto; }

/* sheet tabs */
.sheet {
  height: 30px;
  flex: none;
  display: flex;
  align-items: center;
  gap: 10px;
  background: #fff;
  position: relative;
}
.sheet-tab {
  width: 50px;
  height: 20px;
  background: #efefef;
  border-radius: 2px;
  font-size: 12px;
  color: #333;
  line-height: 20px;
  text-align: center;
}
.sheet-on {
  width: 28px;
  background: #1e88f0;
  color: #fff;
  border-radius: 0 3px 3px 0;
  text-align: right;
  padding-right: 10px;
  white-space: nowrap;
  overflow: hidden;
  direction: rtl;
}
.scale { margin-left: auto; display: flex; align-items: center; padding-right: 154px; height: 100%; }
.scale-label { font-size: 14px; color: #333; margin-right: 7px; }
.scale-sel {
  width: 99px;
  height: 24px;
  border: 1px solid #dcdfe6;
  border-radius: 4px;
  display: flex;
  align-items: center;
  justify-content: space-between;
  font: 13px "Liberation Sans", sans-serif;
  color: #666;
  padding: 0 8px;
}
.chev-l { width: 11px; height: 7px; stroke: #bbb; }
.scale-sep { width: 1px; height: 100%; background: #e5e5e5; margin: 0 12px 0 11px; }
.grid-ico { width: 16px; height: 16px; flex: none; }
.ime {
  position: absolute;
  left: 1583px;
  top: -6px;
  width: 141px;
  height: 35px;
  background: #f4f4f4;
  border-radius: 18px 0 0 18px;
  display: flex;
  align-items: center;
  padding-left: 4px;
  overflow: hidden;
}
.ime-key { width: 25px; height: 25px; border-radius: 7px; background: #5f6b7d; color: #fff; font-size: 15px; font-weight: 700; text-align: center; line-height: 25px; flex: none; }
.ime-cn { margin-left: 9px; font-size: 17px; font-weight: 700; color: #5f6b7d; width: 17px; flex: none; line-height: 20px; }
.ime-moon { width: 24px; height: 24px; margin-left: 11px; flex: none; }
.ime-dot { margin-left: 6px; font-size: 17px; font-weight: 700; color: #5f6b7d; width: 18px; flex: none; line-height: 16px; }
.ime-pen { width: 22px; height: 22px; margin-left: 7px; flex: none; }

/* dock */
.dock {
  height: 38px;
  flex: none;
  display: flex;
  align-items: center;
  background: linear-gradient(90deg, #6a897e 0, #618d7e 22%, #5a9b7d 42%, #5e8f81 62%, #64918a 100%);
  overflow: hidden;
}
.apps { flex: 1; display: flex; align-items: center; gap: 16px; padding-top: 4px; height: 100%; }
.app { width: 24px; height: 24px; flex: none; }
.app-cut { width: 16px; margin-right: -8px; }
.dock-sep { width: 2px; height: 24px; background: #2f4a42; flex: none; margin-right: -8px; }
.app-big { width: 36px; height: 36px; margin: 0 -6px; }
.cal-m { font: 5px "Liberation Sans", sans-serif; fill: #c33; text-anchor: middle; }
.cal-d { font: 700 12px "Liberation Serif", serif; fill: #222; text-anchor: middle; }
.tray { width: 457px; flex: none; display: flex; align-items: center; height: 100%; overflow: hidden; white-space: nowrap; }
.tray-sep { width: 2px; height: 24px; background: #2f4a42; flex: none; margin-right: 5px; }
.tray-sep2 { margin: 0 9px 0 4px; }
.tray-slot { width: 30px; height: 24px; display: flex; align-items: center; justify-content: center; flex: none; }
.tray-ico { width: 19px; height: 19px; }
.tray-kb { height: 14px; }
.rec .tray-ico { width: 22px; height: 16px; }
.timer { width: 61px; padding-left: 3px; font: 500 12.500px "Noto Sans", sans-serif; color: #1a2421; flex: none; }
.clock { display: flex; flex-direction: column; margin-left: 6px; line-height: 1; width: 60px; flex: none; color: #10201b; }
.clock-t { font: 700 15px "Noto Sans", sans-serif; padding-left: 9px; line-height: 17px; }
.clock-d { font: 700 10.500px "Noto Sans", sans-serif; line-height: 13px; }
```
